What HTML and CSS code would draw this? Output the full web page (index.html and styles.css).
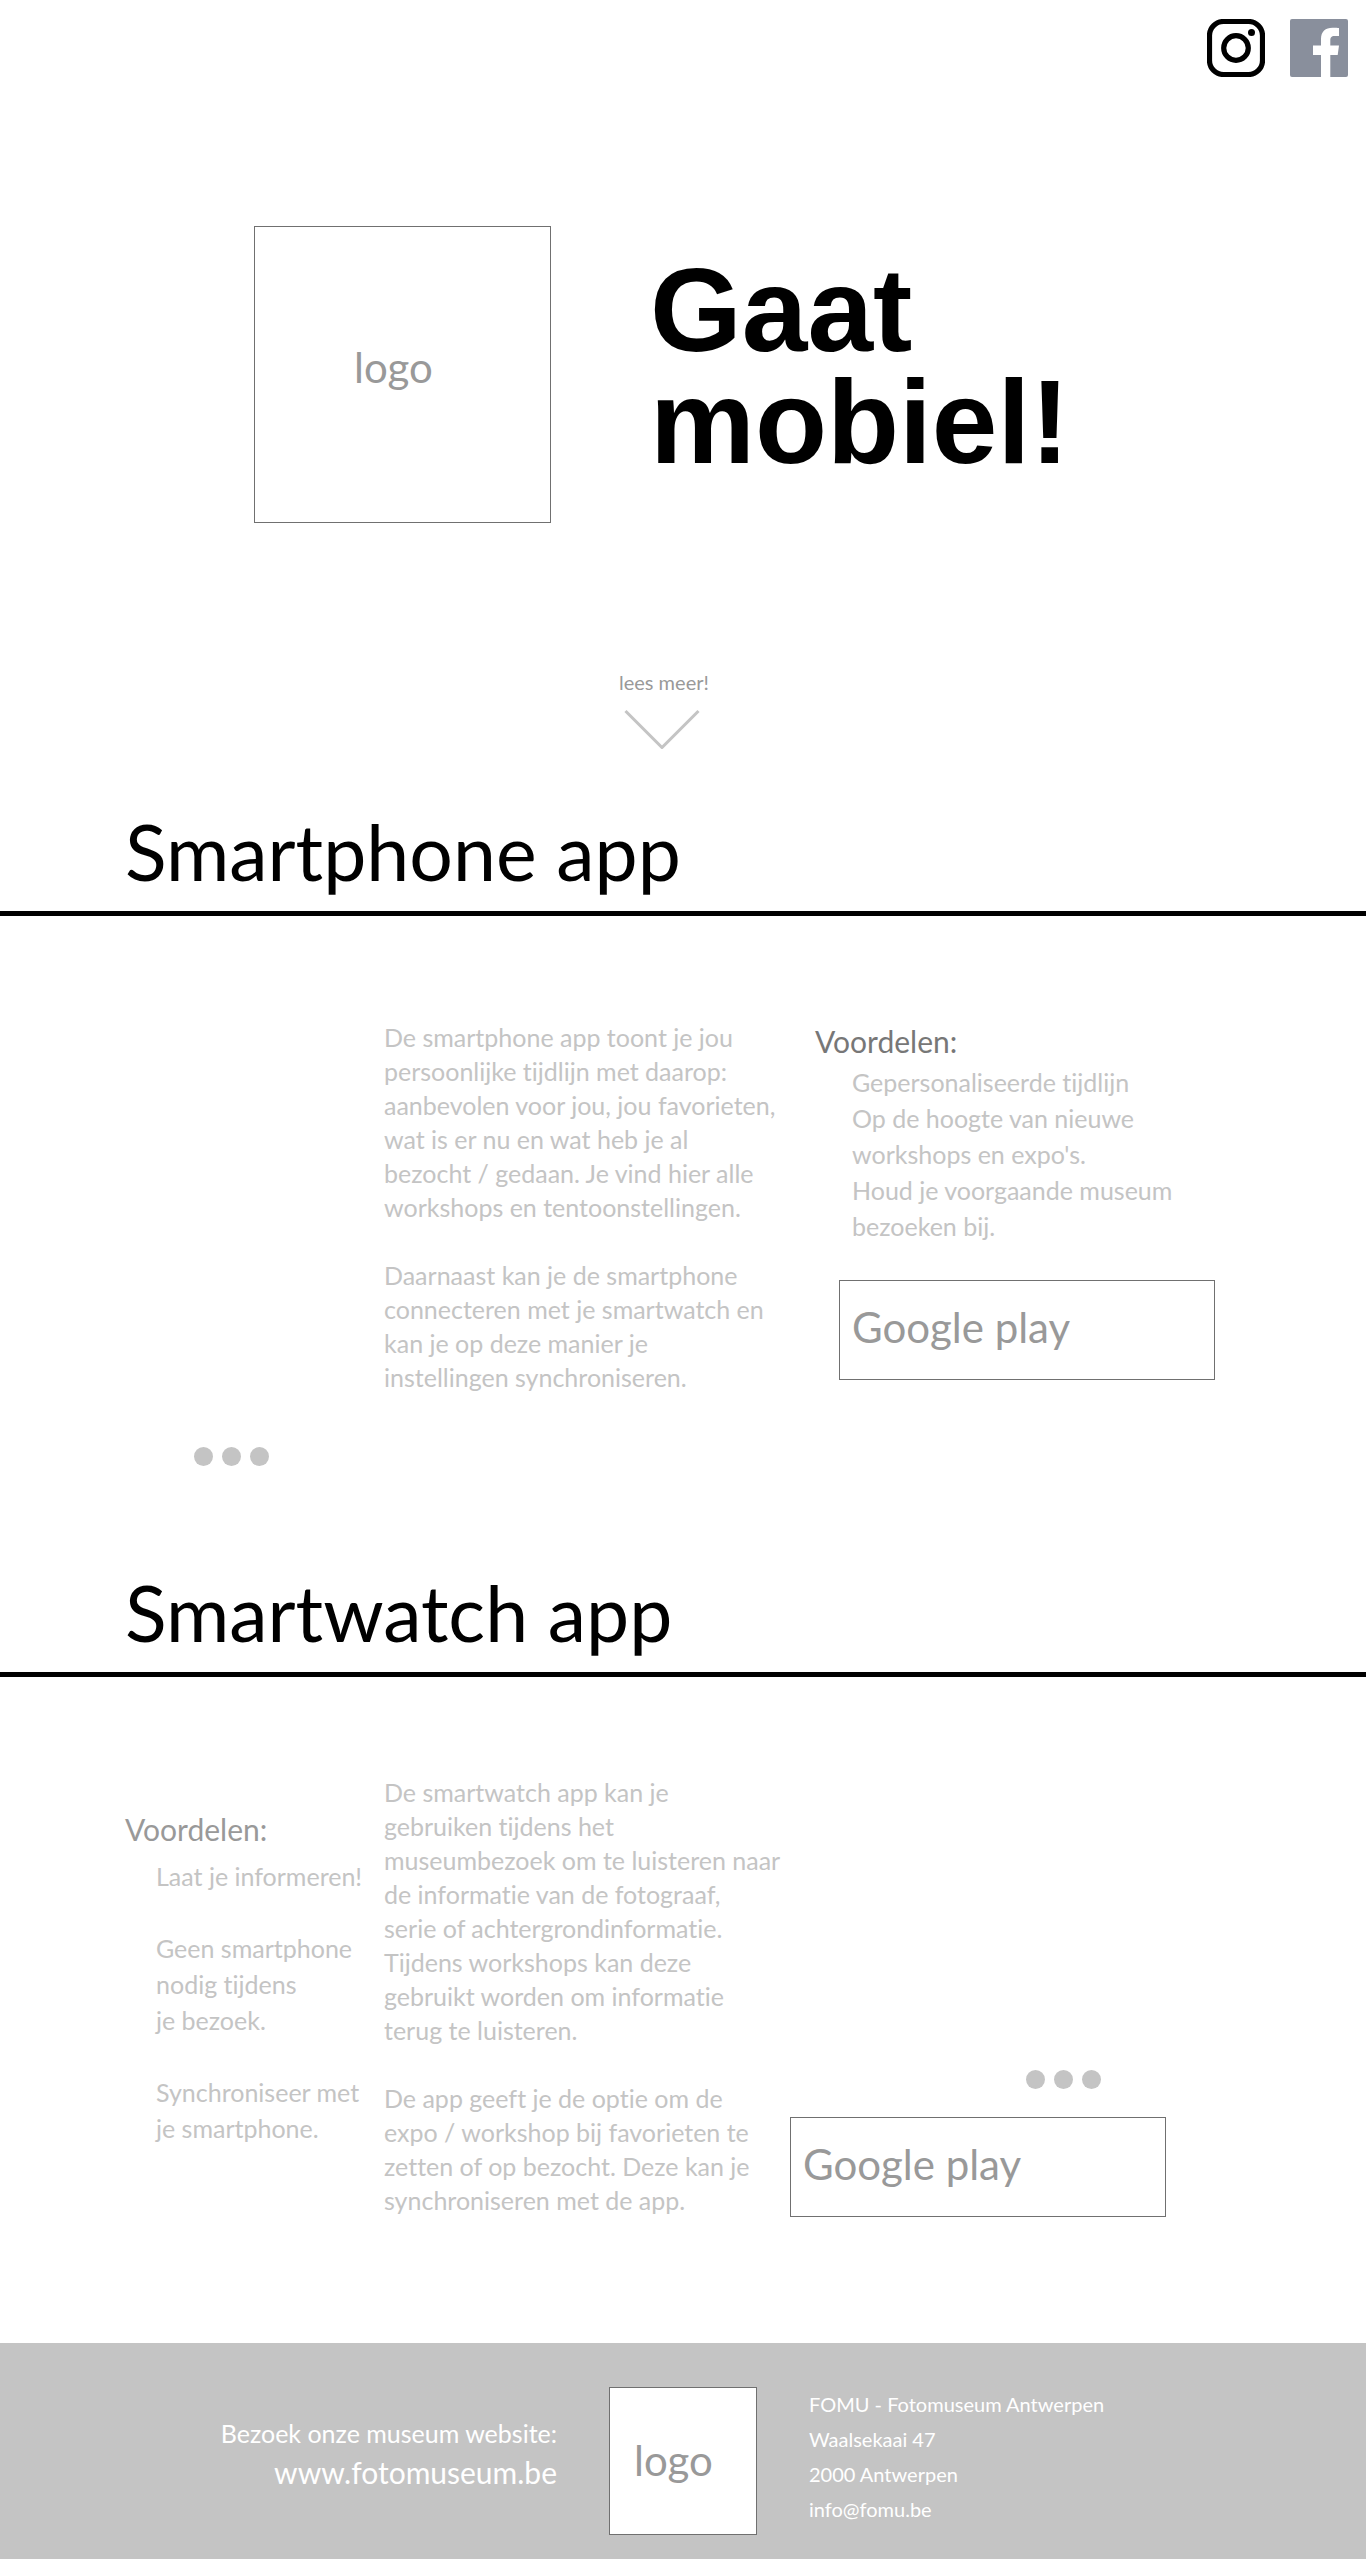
FILE: index.html
```html
<!DOCTYPE html>
<html lang="nl">
<head>
<meta charset="utf-8">
<meta name="viewport" content="width=device-width, initial-scale=1">
<title>FOMU gaat mobiel!</title>
<link rel="stylesheet" href="styles.css">
</head>
<body>
<header class="social">
  <a href="#instagram" aria-label="Instagram">
    <svg class="social-icon" viewBox="0 0 58 58" fill="none" stroke="#000">
      <rect x="2.5" y="2.5" width="53" height="53" rx="14" stroke-width="5.2"/>
      <circle cx="29" cy="29" r="12.3" stroke-width="5.2"/>
      <circle cx="44.5" cy="13.5" r="3.5" fill="#000" stroke="none"/>
    </svg>
  </a>
  <a href="#facebook" aria-label="Facebook">
    <svg class="social-icon" viewBox="0 0 58 58">
      <rect width="58" height="58" rx="2" fill="#898f9c"/>
      <path fill="#fff" d="M31 58V36h-8v-9.500h8V20C31 12.500 35.500 8.700 42.500 8.700c3 0 5.500.1 6.500.3V17h-4.500c-3.300 0-4.200 1.700-4.200 4.200v5.300h8.700L47.700 36h-7.400v22z"/>
    </svg>
  </a>
</header>

<main>
  <div class="hero">
    <div class="logo logo-large">logo</div>
    <h1 class="hero-title">Gaat<br>mobiel!</h1>
  </div>

  <a class="more" href="#smartphone">
    <span>lees meer!</span>
    <svg class="more-arrow" viewBox="0 0 76 40" fill="none" stroke="#c4c4c4" stroke-width="3">
      <path d="M1.500 2 38 38.500 74.500 2"/>
    </svg>
  </a>

  <section id="smartphone">
    <h2 class="section-title">Smartphone app</h2>
    <div class="content content-phone">
      <div class="carousel">
        <div class="dots">
          <button class="dot" type="button" aria-label="Afbeelding 1"></button>
          <button class="dot" type="button" aria-label="Afbeelding 2"></button>
          <button class="dot" type="button" aria-label="Afbeelding 3"></button>
        </div>
      </div>
      <div class="copy">
        <p>De smartphone app toont je jou<br>persoonlijke tijdlijn met daarop:<br>aanbevolen voor jou, jou favorieten,<br>wat is er nu en wat heb je al<br>bezocht / gedaan. Je vind hier alle<br>workshops en tentoonstellingen.</p>
        <p>Daarnaast kan je de smartphone<br>connecteren met je smartwatch en<br>kan je op deze manier je<br>instellingen synchroniseren.</p>
      </div>
      <div class="benefits">
        <h3 class="benefits-title">Voordelen:</h3>
        <ul class="benefits-list">
          <li>Gepersonaliseerde tijdlijn</li>
          <li>Op de hoogte van nieuwe<br>workshops en expo's.</li>
          <li>Houd je voorgaande museum<br>bezoeken bij.</li>
        </ul>
        <a class="store" href="#google-play">Google play</a>
      </div>
    </div>
  </section>

  <section id="smartwatch">
    <h2 class="section-title">Smartwatch app</h2>
    <div class="content content-watch">
      <div class="benefits">
        <h3 class="benefits-title">Voordelen:</h3>
        <ul class="benefits-list">
          <li>Laat je informeren!</li>
          <li>Geen smartphone<br>nodig tijdens<br>je bezoek.</li>
          <li>Synchroniseer met<br>je smartphone.</li>
        </ul>
      </div>
      <div class="copy">
        <p>De smartwatch app kan je<br>gebruiken tijdens het<br>museumbezoek om te luisteren naar<br>de informatie van de fotograaf,<br>serie of achtergrondinformatie.<br>Tijdens workshops kan deze<br>gebruikt worden om informatie<br>terug te luisteren.</p>
        <p>De app geeft je de optie om de<br>expo / workshop bij favorieten te<br>zetten of op bezocht. Deze kan je<br>synchroniseren met de app.</p>
      </div>
      <div class="carousel">
        <div class="dots">
          <button class="dot" type="button" aria-label="Afbeelding 1"></button>
          <button class="dot" type="button" aria-label="Afbeelding 2"></button>
          <button class="dot" type="button" aria-label="Afbeelding 3"></button>
        </div>
        <a class="store" href="#google-play">Google play</a>
      </div>
    </div>
  </section>
</main>

<footer class="footer">
  <div class="footer-site">
    <p>Bezoek onze museum website:</p>
    <a class="footer-link" href="#website">www.fotomuseum.be</a>
  </div>
  <div class="logo logo-small">logo</div>
  <address class="footer-address">FOMU - Fotomuseum Antwerpen<br>Waalsekaai 47<br>2000 Antwerpen<br><a href="mailto:info@fomu.be">info@fomu.be</a></address>
</footer>
</body>
</html>
```
FILE: styles.css
```css
*, *::before, *::after { box-sizing: border-box; }

body {
  margin: 0;
  background: #fff;
  color: #c4c4c4;
  font-family: Lato, "Liberation Sans", sans-serif;
  font-size: 25px;
  font-variant-ligatures: none;
  line-height: 36px;
}

h1, h2, h3, p, ul { margin: 0; padding: 0; font-weight: 400; }
ul { list-style: none; }
a { color: inherit; text-decoration: none; }

.social {
  display: flex;
  justify-content: flex-end;
  gap: 25px;
  padding: 19px 18px 0;
}
.social-icon { display: block; width: 58px; height: 58px; }

.hero {
  display: flex;
  align-items: flex-start;
  gap: 99px;
  padding: 149px 0 0 254px;
}
.hero-title {
  padding-top: 28px;
  color: #000;
  font: bold 118px/112px "Liberation Sans", Arial, sans-serif;
}

.logo {
  flex: none;
  background: #fff;
  border: 1px solid #707070;
  color: #999;
  font-size: 42px;
  line-height: 50px;
}
.logo-large { width: 297px; height: 297px; padding: 115px 0 0 99px; }
.logo-small { width: 148px; height: 148px; padding: 47px 0 0 24px; }

.more {
  display: flex;
  flex-direction: column;
  align-items: flex-start;
  gap: 15px;
  width: max-content;
  margin: 147px 0 55px 619px;
  color: #999;
  font-size: 20px;
  line-height: 24px;
}
.more-arrow { display: block; width: 76px; height: 40px; margin-left: 5px; }

.section-title {
  padding: 1px 125px 14px;
  border-bottom: 5px solid #000;
  color: #000;
  font-size: 77px;
  line-height: 92px;
}

.content { display: grid; padding: 0 125px; white-space: nowrap; }
.content-phone {
  grid-template-columns: 259fr 431fr 426fr;
  padding-top: 104px;
  padding-bottom: 99px;
}
.content-watch {
  grid-template-columns: 259fr 406fr 451fr;
  padding-top: 98px;
  padding-bottom: 126px;
}

.copy { line-height: 34px; }
.copy p + p { margin-top: 34px; }

.benefits-title { font-size: 30px; line-height: 36px; }
.content-phone .benefits-title { margin: 3px 0 5px; color: #777; }
.content-phone .benefits-list { padding-left: 37px; }
.content-watch .benefits-title { margin: 36px 0 11px; color: #999; }
.content-watch .benefits-list { display: grid; gap: 36px; padding-left: 31px; }

.store {
  display: block;
  width: 376px;
  padding: 21px 12px 27px;
  border: 1px solid #707070;
  color: #999;
  font-size: 42px;
  line-height: 50px;
}
.content-phone .store { margin: 36px 0 0 24px; }

.carousel { display: flex; flex-direction: column; justify-content: flex-end; }
.content-phone .carousel { min-height: 446px; padding-left: 69px; }
.content-watch .carousel { gap: 28px; }
.content-watch .dots { padding-left: 236px; }
.dots { display: flex; gap: 9px; }
.dot {
  width: 19px;
  height: 19px;
  padding: 0;
  border: 0;
  border-radius: 50%;
  background: #c4c4c4;
}

.footer {
  display: grid;
  grid-template-columns: 1fr 148px 1fr;
  gap: 52px;
  padding: 44px 0 24px;
  background: #c4c4c4;
  color: #fff;
}
.footer-site { padding-top: 28px; text-align: right; }
.footer-link { font-size: 30px; line-height: 42px; }
.footer-address { font-size: 20px; font-style: normal; line-height: 35px; }
```
